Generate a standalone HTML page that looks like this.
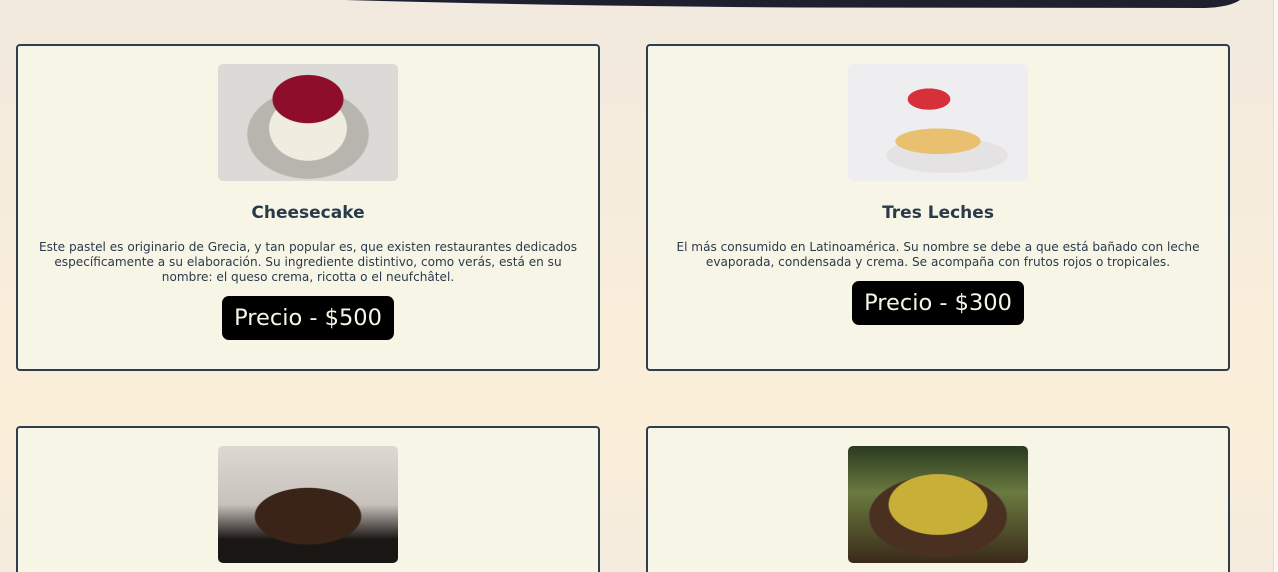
<!DOCTYPE html>
<html><head><meta charset="utf-8"><style>
html,body{margin:0;padding:0;width:1278px;height:572px;overflow:hidden}
body{background:linear-gradient(#f2eadf 0px,#fbefd9 420px,#f4ebde 572px);font-family:"DejaVu Sans","Liberation Sans",sans-serif;position:relative}
.top{position:absolute;left:0;top:0}
.sb{position:absolute;right:0;top:0;width:4px;height:572px;background:#fbf7f0;border-left:1px solid #e0dcd4}
.card{position:absolute;width:580px;height:323px;border:2px solid #2f3e4e;border-radius:4px;background:#f7f6e6;text-align:center;color:#2b3a4b}
.img{width:180px;height:117px;margin:18px auto 0;border-radius:5px}
h2{font-size:17px;margin:21px 0 0;line-height:22px}
p{font-size:12.1px;line-height:15px;margin:16px 18px 0}
.btn{display:inline-block;background:#000;color:#f7f6e6;font-size:22.5px;line-height:44px;height:44px;padding:0 12px;border-radius:7px;margin-top:11px}
</style></head><body>
<svg class="top" width="1278" height="12"><path d="M345 0 Q560 6 800 7.5 L1205 8 Q1230 7 1240 0 Z" fill="#1e2030"/></svg>
<div class="sb"></div>
<div class="card" style="left:16px;top:44px">
<div class="img" style="background:radial-gradient(ellipse 50px 34px at 50% 30%,#8e0d2a 70%,transparent 72%),radial-gradient(ellipse 48px 40px at 50% 55%,#f1ece0 80%,transparent 82%),radial-gradient(ellipse 75px 55px at 50% 60%,#b8b4ae 80%,transparent 82%),#dcdad6"></div>
<h2>Cheesecake</h2>
<p>Este pastel es originario de Grecia, y tan popular es, que existen restaurantes dedicados específicamente a su elaboración. Su ingrediente distintivo, como verás, está en su nombre: el queso crema, ricotta o el neufchâtel.</p>
<div class="btn">Precio - $500</div>
</div>
<div class="card" style="left:646px;top:44px">
<div class="img" style="background:radial-gradient(ellipse 60px 18px at 50% 66%,#e8c070 70%,transparent 72%),radial-gradient(ellipse 75px 22px at 55% 78%,#e4e2e2 80%,transparent 82%),radial-gradient(ellipse 30px 15px at 45% 30%,#d8303a 70%,transparent 72%),#eeeef0"></div>
<h2>Tres Leches</h2>
<p>El más consumido en Latinoamérica. Su nombre se debe a que está bañado con leche evaporada, condensada y crema. Se acompaña con frutos rojos o tropicales.</p>
<div class="btn">Precio - $300</div>
</div>
<div class="card" style="left:16px;top:426px">
<div class="img" style="background:radial-gradient(ellipse 75px 40px at 50% 60%,#3a2418 70%,transparent 72%),linear-gradient(#ddd8d2,#c8c2bc 50%,#1a1614 80%)"></div>
</div>
<div class="card" style="left:646px;top:426px">
<div class="img" style="background:radial-gradient(ellipse 65px 40px at 50% 50%,#c8b038 75%,transparent 77%),radial-gradient(ellipse 85px 50px at 50% 60%,#4a3020 80%,transparent 82%),linear-gradient(#2a3a20,#6a7a40 40%,#3a2a1a)"></div>
</div>
</body></html>
